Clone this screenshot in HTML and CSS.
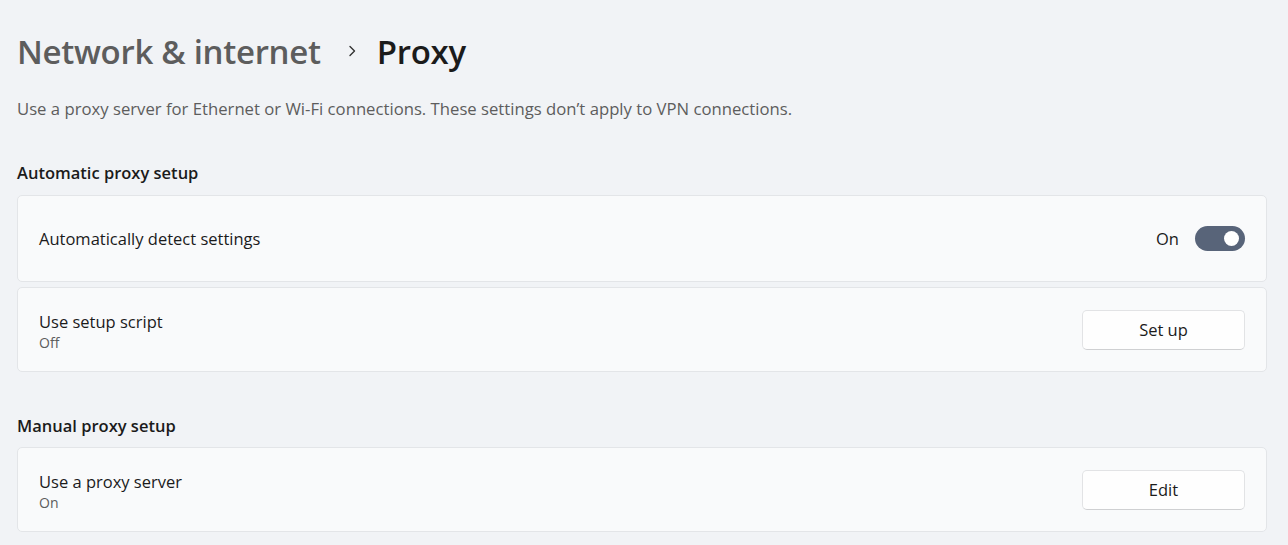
FILE: index.html
```html
<!DOCTYPE html>
<html lang="en">
<head>
    <meta charset="UTF-8">
    <title>Proxy</title>
    <link rel="stylesheet" href="styles.css">
</head>
<body>
    <div class="page">
        <h1 class="breadcrumb">
            <span class="crumb-parent">Network &amp; internet</span>
            <svg class="crumb-sep" width="16" height="16" viewBox="0 0 16 16"><path d="M6 3.5 L10.5 8 L6 12.5" fill="none" stroke="#333" stroke-width="1.4" stroke-linecap="round" stroke-linejoin="round"/></svg>
            <span class="crumb-current">Proxy</span>
        </h1>

        <p class="desc">Use a proxy server for Ethernet or Wi-Fi connections. These settings don’t apply to VPN connections.</p>

        <h2 class="section-title">Automatic proxy setup</h2>
        <div class="card card-tall">
            <div class="card-text">
                <div class="card-label">Automatically detect settings</div>
            </div>
            <div class="card-action">
                <span class="toggle-label">On</span>
                <span class="toggle"><span class="knob"></span></span>
            </div>
        </div>
        <div class="card card-gap">
            <div class="card-text two-line">
                <div class="card-label">Use setup script</div>
                <div class="card-sub">Off</div>
            </div>
            <button class="btn">Set up</button>
        </div>

        <h2 class="section-title section-second">Manual proxy setup</h2>
        <div class="card">
            <div class="card-text two-line">
                <div class="card-label">Use a proxy server</div>
                <div class="card-sub">On</div>
            </div>
            <button class="btn">Edit</button>
        </div>
    </div>
</body>
</html>
```

FILE: styles.css
```css
body {
    margin: 0;
    background-color: #f1f3f6;
    font-family: "Open Sans", "Noto Sans", sans-serif;
    color: #1b1b1b;
    overflow: hidden;
}
.page {
    padding: 0 21px 0 17px;
}
.breadcrumb {
    display: flex;
    align-items: center;
    margin: 27px 0 0;
    height: 48px;
    font-size: 33px;
    font-weight: 600;
    letter-spacing: -0.3px;
}
.crumb-parent {
    color: #5d5d5d;
}
.crumb-sep {
    margin: 0 17px 0 23px;
}
.crumb-current {
    color: #1b1b1b;
}
.desc {
    margin: 22px 0 0;
    font-size: 16.7px;
    line-height: 24px;
    color: #5d5d5d;
}
.section-title {
    margin: 40px 0 10px;
    font-size: 16.5px;
    line-height: 24px;
    font-weight: 600;
}
.section-second {
    margin-top: 42px;
    margin-bottom: 9px;
}
.card {
    display: flex;
    align-items: center;
    justify-content: space-between;
    height: 83px;
    padding: 0 21px;
    background-color: #f9fafb;
    border: 1px solid #e3e5e8;
    border-radius: 5px;
}
.card-tall {
    height: 85px;
}
.card-gap {
    margin-top: 5px;
}
.two-line {
    padding-top: 4px;
}
.card-label {
    font-size: 16.5px;
    line-height: 22px;
}
.card-sub {
    font-size: 14px;
    line-height: 19px;
    color: #5d5d5d;
}
.card-action {
    display: flex;
    align-items: center;
}
.toggle-label {
    font-size: 16.5px;
    margin-right: 16px;
}
.toggle {
    position: relative;
    display: inline-block;
    width: 50px;
    height: 25px;
    border-radius: 13px;
    background-color: #586479;
}
.knob {
    position: absolute;
    right: 6px;
    top: 5px;
    width: 15px;
    height: 15px;
    border-radius: 50%;
    background-color: #fff;
}
.btn {
    width: 163px;
    height: 40px;
    margin-right: 0;
    font-family: inherit;
    font-size: 16.5px;
    color: #1b1b1b;
    background-color: #fefefe;
    border: 1px solid #e2e3e5;
    border-bottom-color: #cfd0d2;
    border-radius: 5px;
}
```
